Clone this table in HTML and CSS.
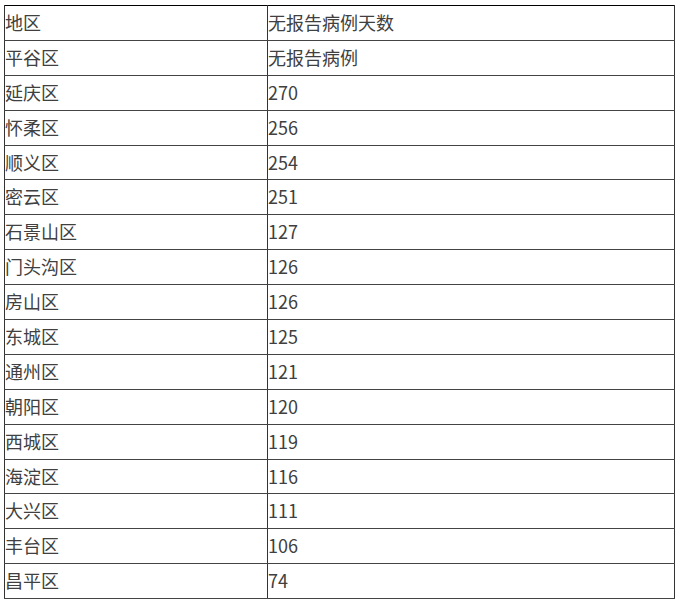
FILE: index.html
```html
<!DOCTYPE html>
<html lang="zh">
<head>
<meta charset="utf-8">
<link rel="stylesheet" href="styles.css">
</head>
<body>
<table class="data">
<tr><td class="c1">地区</td><td class="c2">无报告病例天数</td></tr>
<tr><td class="c1">平谷区</td><td class="c2">无报告病例</td></tr>
<tr><td class="c1">延庆区</td><td class="c2">270</td></tr>
<tr><td class="c1">怀柔区</td><td class="c2">256</td></tr>
<tr><td class="c1">顺义区</td><td class="c2">254</td></tr>
<tr><td class="c1">密云区</td><td class="c2">251</td></tr>
<tr><td class="c1">石景山区</td><td class="c2">127</td></tr>
<tr><td class="c1">门头沟区</td><td class="c2">126</td></tr>
<tr><td class="c1">房山区</td><td class="c2">126</td></tr>
<tr><td class="c1">东城区</td><td class="c2">125</td></tr>
<tr><td class="c1">通州区</td><td class="c2">121</td></tr>
<tr><td class="c1">朝阳区</td><td class="c2">120</td></tr>
<tr><td class="c1">西城区</td><td class="c2">119</td></tr>
<tr><td class="c1">海淀区</td><td class="c2">116</td></tr>
<tr><td class="c1">大兴区</td><td class="c2">111</td></tr>
<tr><td class="c1">丰台区</td><td class="c2">106</td></tr>
<tr><td class="c1">昌平区</td><td class="c2">74</td></tr>
</table>
</body>
</html>
```
FILE: styles.css
```css
html, body {
  margin: 0;
  padding: 0;
  background: #fff;
}
body {
  padding: 5px 0 0 4px;
  font-family: "Noto Sans CJK SC", "Noto Sans", sans-serif;
  font-size: 18px;
  color: #404040;
}
.data {
  border-collapse: collapse;
  width: 671px;
  border: 1px solid #000;
}
.data td {
  height: 34.9px;
  padding: 0 0 2px 0;
  border-left: 1px solid #333;
  border-right: 1px solid #333;
  border-bottom: 1px solid #444;
  vertical-align: middle;
  line-height: 24px;
  box-sizing: border-box;
}
.data .c1 {
  width: 263px;
}
```
